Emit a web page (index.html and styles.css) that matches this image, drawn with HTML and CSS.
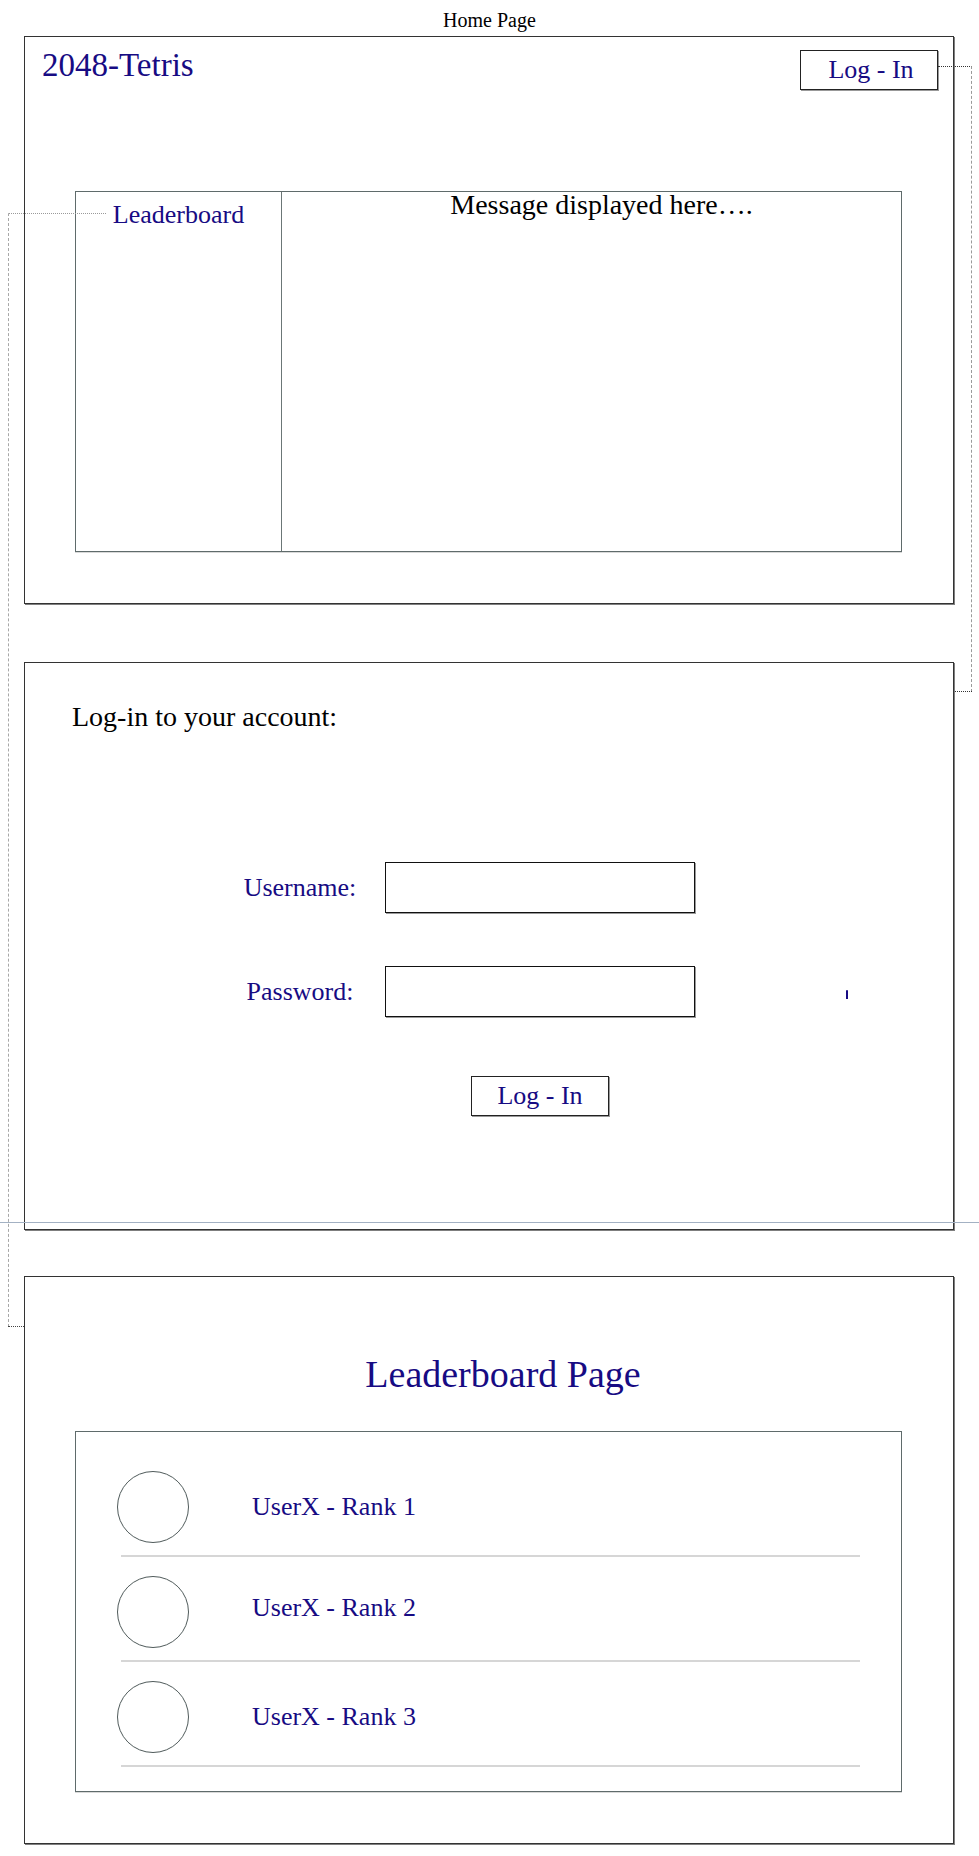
FILE: index.html
```html
<!DOCTYPE html>
<html lang="en">
<head>
<meta charset="utf-8">
<title>2048-Tetris wireframe</title>
<link rel="stylesheet" href="styles.css">
</head>
<body>
<div class="page">
  <div class="caption">Home Page</div>

  <section class="frame frame-home">
    <header class="home-header">
      <h1 class="brand">2048-Tetris</h1>
      <div class="btn btn-top">Log - In</div>
    </header>
    <div class="home-body">
      <div class="side-cell">Leaderboard</div>
      <div class="main-cell">Message displayed here….</div>
    </div>
  </section>

  <section class="frame frame-login">
    <h2 class="login-title">Log-in to your account:</h2>
    <div class="login-form">
      <span class="field-label">Username:</span>
      <div class="field-input"></div>
      <span class="spacer"></span>
      <span class="field-label">Password:</span>
      <div class="field-input"></div>
      <span class="tick"></span>
      <div class="btn btn-submit">Log - In</div>
    </div>
  </section>

  <section class="frame frame-board">
    <h2 class="board-title">Leaderboard Page</h2>
    <div class="board-box">
      <ul class="rank-list">
        <li class="rank-row"><span class="avatar"></span><span class="rank-name">UserX - Rank 1</span></li>
        <li class="rank-row"><span class="avatar"></span><span class="rank-name rank-name-up">UserX - Rank 2</span></li>
        <li class="rank-row"><span class="avatar"></span><span class="rank-name">UserX - Rank 3</span></li>
      </ul>
    </div>
  </section>

  <div class="rule-line"></div>
  <div class="link link-login-a"></div>
  <div class="link link-login-b"></div>
  <div class="link link-board-a"></div>
  <div class="link link-board-b"></div>
</div>
</body>
</html>
```

FILE: styles.css
```css
* { box-sizing: border-box; }

html, body {
  margin: 0;
  padding: 0;
  background: #ffffff;
}

body {
  font-family: "Liberation Serif", "Times New Roman", serif;
  color: #000;
}

.page {
  position: relative;
  width: 979px;
  min-height: 1856px;
}

.caption {
  height: 36px;
  padding-top: 7px;
  font-size: 20px;
  line-height: 26px;
  text-align: center;
}

.frame {
  width: 930px;
  height: 568px;
  margin-left: 24px;
  border: 1px solid #333;
  box-shadow: 1px 1px 0 rgba(0, 0, 0, 0.5);
  background: #fff;
}

.frame-login { margin-top: 58px; }
.frame-board { margin-top: 46px; }

/* ---------- Home ---------- */
.home-header {
  display: flex;
  justify-content: space-between;
  align-items: flex-start;
  padding: 13px 15px 0 17px;
}

.brand {
  margin: -4px 0 0 0;
  font-size: 33px;
  line-height: 38px;
  font-weight: normal;
  color: #170b83;
}

.btn {
  width: 138px;
  height: 40px;
  border: 1px solid #222;
  box-shadow: 1px 1px 0 rgba(0, 0, 0, 0.4);
  font-size: 26px;
  line-height: 38px;
  text-align: center;
  color: #170b83;
  background: #fff;
}

.btn-top {
  padding-left: 4px;
}

.home-body {
  display: grid;
  grid-template-columns: 206px 1fr;
  width: 827px;
  height: 361px;
  margin: 101px 0 0 50px;
  border: 1px solid #5f6b6b;
  box-shadow: 0 1px 0 rgba(0, 0, 0, 0.15);
}

.side-cell {
  border-right: 1px solid #6b7676;
  padding-top: 8px;
  font-size: 26px;
  line-height: 30px;
  text-align: center;
  color: #170b83;
}

.main-cell {
  padding: 0 0 0 20px;
  margin-top: -3px;
  font-size: 28px;
  line-height: 32px;
  text-align: center;
}

/* ---------- Login ---------- */
.frame-login {
  padding-left: 47px;
}

.login-title {
  margin: 38px 0 0 0;
  font-size: 28px;
  line-height: 32px;
  font-weight: normal;
}

.login-form {
  display: grid;
  grid-template-columns: 130px 310px 1fr;
  column-gap: 20px;
  row-gap: 53px;
  margin: 129px 0 0 163px;
}

.field-label {
  align-self: center;
  text-align: center;
  font-size: 26px;
  line-height: 30px;
  color: #170b83;
}

.field-input {
  height: 51px;
  border: 1px solid #111;
  box-shadow: 1px 1px 0 rgba(0, 0, 0, 0.4);
}

.tick {
  align-self: center;
  justify-self: start;
  width: 2px;
  height: 9px;
  margin: 6px 0 0 131px;
  background: #170b83;
  border-radius: 1px 1px 0 0;
}

.btn-submit {
  grid-column: 2;
  justify-self: center;
  margin-top: 6px;
}

/* ---------- Leaderboard ---------- */
.board-title {
  margin: 75px 0 0 0;
  padding-left: 28px;
  font-size: 38px;
  line-height: 44px;
  font-weight: normal;
  text-align: center;
  color: #170b83;
}

.board-box {
  width: 827px;
  height: 361px;
  margin: 35px 0 0 50px;
  border: 1px solid #5f6b6b;
  box-shadow: 0 1px 0 rgba(0, 0, 0, 0.15);
}

.rank-list {
  list-style: none;
  margin: 0;
  padding: 20px 41px 0 45px;
}

.rank-row {
  display: flex;
  align-items: center;
  padding: 19px 0 12px 0;
  border-bottom: 2px solid #d6d6d6;
}

.avatar {
  flex-shrink: 0;
  width: 72px;
  height: 72px;
  margin-left: -4px;
  border: 1px solid #505b5b;
  border-radius: 50%;
}

.rank-name {
  margin-left: 63px;
  font-size: 26px;
  line-height: 30px;
  color: #170b83;
}

.rank-name-up {
  margin-bottom: 8px;
}

/* ---------- Diagram overlays ---------- */
.rule-line {
  position: absolute;
  left: 0;
  top: 1222px;
  width: 979px;
  height: 1px;
  background: #a3b1c3;
}

.link {
  position: absolute;
}

.link-login-a {
  left: 938px;
  top: 66px;
  width: 34px;
  height: 626px;
  border-top: 1px dotted #333;
  border-right: 1px dashed #9a9a9a;
}

.link-login-b {
  left: 955px;
  top: 691px;
  width: 17px;
  height: 1px;
  border-top: 1px dotted #333;
}

.link-board-a {
  left: 8px;
  top: 213px;
  width: 98px;
  height: 1114px;
  border-top: 1px dotted #9a9a9a;
  border-left: 1px dashed #a8a8a8;
}

.link-board-b {
  left: 8px;
  top: 1326px;
  width: 16px;
  height: 1px;
  border-top: 1px dotted #444;
}
```
